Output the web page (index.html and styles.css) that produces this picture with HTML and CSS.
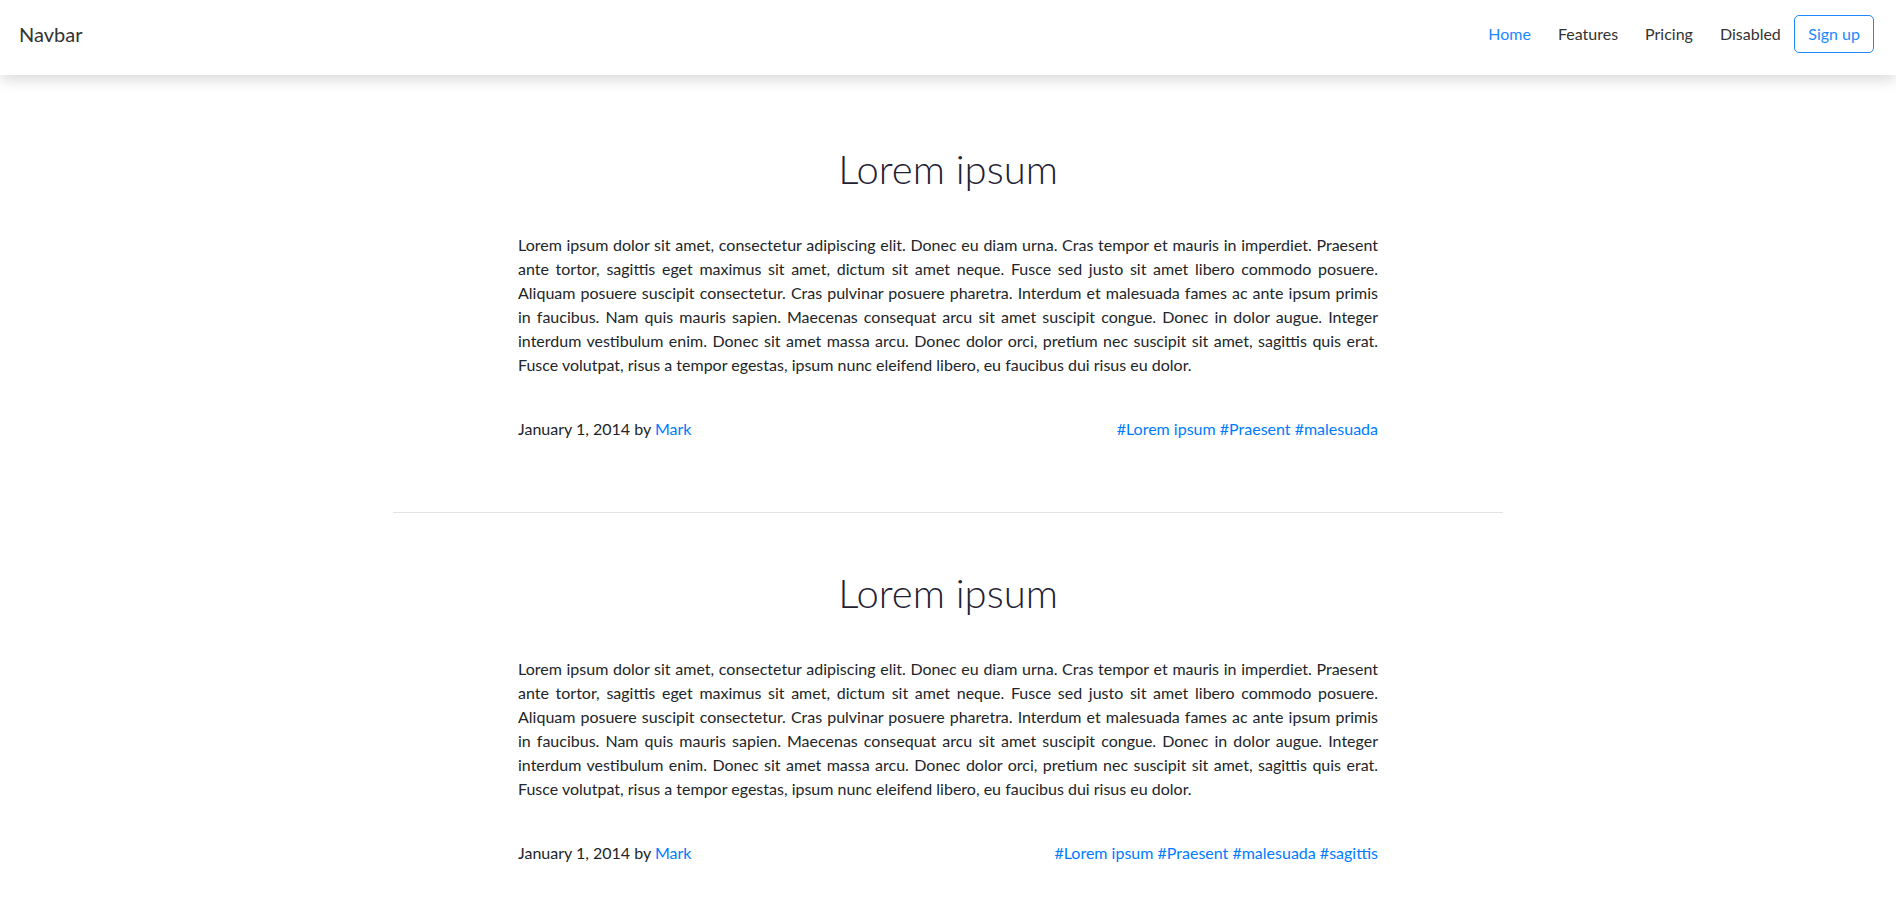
FILE: index.html
```html
<!DOCTYPE html>
<html lang="en">
<head>
<meta charset="utf-8">
<title>Blog</title>
<link rel="stylesheet" href="styles.css">
</head>
<body>
<nav class="navbar">
  <a class="brand" href="#">Navbar</a>
  <ul class="nav">
    <li><a class="nav-link active" href="#">Home</a></li>
    <li><a class="nav-link" href="#">Features</a></li>
    <li><a class="nav-link" href="#">Pricing</a></li>
    <li><a class="nav-link" href="#">Disabled</a></li>
    <li><a class="btn-outline" href="#">Sign up</a></li>
  </ul>
</nav>
<main class="container">
  <article class="post">
    <h1 class="post-title">Lorem ipsum</h1>
    <p class="post-body">Lorem ipsum dolor sit amet, consectetur adipiscing elit. Donec eu diam urna. Cras tempor et mauris in imperdiet. Praesent ante tortor, sagittis eget maximus sit amet, dictum sit amet neque. Fusce sed justo sit amet libero commodo posuere. Aliquam posuere suscipit consectetur. Cras pulvinar posuere pharetra. Interdum et malesuada fames ac ante ipsum primis in faucibus. Nam quis mauris sapien. Maecenas consequat arcu sit amet suscipit congue. Donec in dolor augue. Integer interdum vestibulum enim. Donec sit amet massa arcu. Donec dolor orci, pretium nec suscipit sit amet, sagittis quis erat. Fusce volutpat, risus a tempor egestas, ipsum nunc eleifend libero, eu faucibus dui risus eu dolor.</p>
    <div class="post-meta">
      <span>January 1, 2014 by <a href="#">Mark</a></span>
      <span class="tags"><a href="#">#Lorem ipsum</a> <a href="#">#Praesent</a> <a href="#">#malesuada</a></span>
    </div>
  </article>
  <article class="post">
    <h1 class="post-title">Lorem ipsum</h1>
    <p class="post-body">Lorem ipsum dolor sit amet, consectetur adipiscing elit. Donec eu diam urna. Cras tempor et mauris in imperdiet. Praesent ante tortor, sagittis eget maximus sit amet, dictum sit amet neque. Fusce sed justo sit amet libero commodo posuere. Aliquam posuere suscipit consectetur. Cras pulvinar posuere pharetra. Interdum et malesuada fames ac ante ipsum primis in faucibus. Nam quis mauris sapien. Maecenas consequat arcu sit amet suscipit congue. Donec in dolor augue. Integer interdum vestibulum enim. Donec sit amet massa arcu. Donec dolor orci, pretium nec suscipit sit amet, sagittis quis erat. Fusce volutpat, risus a tempor egestas, ipsum nunc eleifend libero, eu faucibus dui risus eu dolor.</p>
    <div class="post-meta">
      <span>January 1, 2014 by <a href="#">Mark</a></span>
      <span class="tags"><a href="#">#Lorem ipsum</a> <a href="#">#Praesent</a> <a href="#">#malesuada</a> <a href="#">#sagittis</a></span>
    </div>
  </article>
</main>
</body>
</html>
```
FILE: styles.css
```css
* { box-sizing: border-box; }
html, body { margin: 0; padding: 0; }
body {
  font-family: "Lato", "Liberation Sans", sans-serif;
  font-size: 16px;
  line-height: 1.5;
  color: #212529;
  background: #fff;
}
a { color: #007bff; text-decoration: none; }

.navbar {
  display: flex;
  align-items: center;
  justify-content: space-between;
  height: 75px;
  padding: 0 22px 7px 19px;
  background: #fff;
  box-shadow: 0 4px 14px rgba(0, 0, 0, 0.16);
  position: relative;
  z-index: 1;
}
.brand {
  font-size: 20px;
  color: #333;
  line-height: 1;
}
.nav {
  display: flex;
  align-items: center;
  list-style: none;
  margin: 0;
  padding: 0;
}
.nav-link {
  display: block;
  padding: 8px 13.5px;
  color: #333;
  font-size: 16px;
}
.nav-link.active { color: #1e88ff; }
.btn-outline {
  display: block;
  height: 38px;
  padding: 6px 13px;
  border: 1px solid #1e88ff;
  border-radius: 5px;
  color: #1e88ff;
  font-size: 16px;
  line-height: 24px;
}

.container {
  width: 1110px;
  margin: 0 auto;
  padding-top: 14px;
}
.post {
  padding: 56px 0 71px;
}
.post + .post { border-top: 1px solid #e3e3e3; }
.post-title {
  margin: 0 0 40px;
  text-align: center;
  font-size: 40px;
  font-weight: 300;
  line-height: 48px;
  color: #1f2235;
}
.post-body {
  width: 860px;
  margin: 0 auto 40px;
  text-align: justify;
}
.post-meta {
  width: 860px;
  margin: 0 auto;
  display: flex;
  justify-content: space-between;
}
```
